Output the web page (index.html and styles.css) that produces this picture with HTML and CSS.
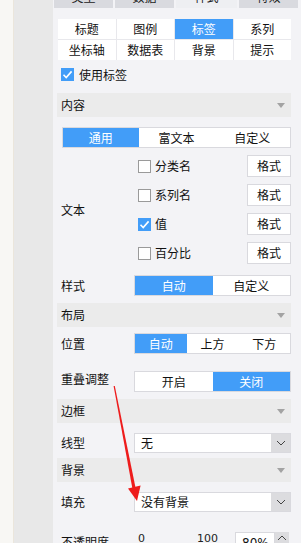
FILE: index.html
```html
<!DOCTYPE html>
<html lang="zh">
<head>
<meta charset="utf-8">
<link rel="stylesheet" href="styles.css">
</head>
<body>
<div class="app">
  <div class="edge"></div>
  <div class="rail"></div>
  <div class="panel">
    <div class="tabs">
      <div class="tab">类型</div>
      <div class="tab">数据</div>
      <div class="tab active">样式</div>
      <div class="tab">特效</div>
    </div>

    <div class="cats">
      <div class="cat">标题</div>
      <div class="cat">图例</div>
      <div class="cat active">标签</div>
      <div class="cat">系列</div>
      <div class="cat">坐标轴</div>
      <div class="cat">数据表</div>
      <div class="cat">背景</div>
      <div class="cat">提示</div>
    </div>

    <div class="check-row">
      <span class="cb on"><svg viewBox="0 0 13 13"><path d="M2.5 6.8 L5.2 9.6 L10.6 3.4" fill="none" stroke="#fff" stroke-width="1.6"/></svg></span>
      <span>使用标签</span>
    </div>

    <div class="section">内容<span class="tri"></span></div>

    <div class="seg seg-wide three">
      <div class="seg-item active">通用</div>
      <div class="seg-item">富文本</div>
      <div class="seg-item">自定义</div>
    </div>

    <div class="form-row text-group">
      <div class="lbl">文本</div>
      <div class="opts">
        <div class="opt"><span class="cb"></span><span class="opt-name">分类名</span><span class="fmt">格式</span></div>
        <div class="opt"><span class="cb"></span><span class="opt-name">系列名</span><span class="fmt">格式</span></div>
        <div class="opt"><span class="cb on"><svg viewBox="0 0 13 13"><path d="M2.5 6.8 L5.2 9.6 L10.6 3.4" fill="none" stroke="#fff" stroke-width="1.6"/></svg></span><span class="opt-name">值</span><span class="fmt">格式</span></div>
        <div class="opt"><span class="cb"></span><span class="opt-name">百分比</span><span class="fmt">格式</span></div>
      </div>
    </div>

    <div class="form-row row-style">
      <div class="lbl">样式</div>
      <div class="seg two">
        <div class="seg-item active">自动</div>
        <div class="seg-item">自定义</div>
      </div>
    </div>

    <div class="section sec-layout">布局<span class="tri"></span></div>

    <div class="form-row row-pos">
      <div class="lbl">位置</div>
      <div class="seg three">
        <div class="seg-item active">自动</div>
        <div class="seg-item">上方</div>
        <div class="seg-item">下方</div>
      </div>
    </div>

    <div class="form-row row-overlap">
      <div class="lbl lbl-lift">重叠调整</div>
      <div class="seg two">
        <div class="seg-item">开启</div>
        <div class="seg-item active">关闭</div>
      </div>
    </div>

    <div class="section sec-border">边框<span class="tri"></span></div>

    <div class="form-row row-line">
      <div class="lbl">线型</div>
      <div class="select">
        <span class="select-val">无</span>
        <span class="select-btn"><svg viewBox="0 0 10 6" width="10" height="6"><path d="M1 1 L5 5 L9 1" fill="none" stroke="#444" stroke-width="1"/></svg></span>
      </div>
    </div>

    <div class="section sec-bg">背景<span class="tri"></span></div>

    <div class="form-row row-fill">
      <div class="lbl">填充</div>
      <div class="select">
        <span class="select-val">没有背景</span>
        <span class="select-btn"><svg viewBox="0 0 10 6" width="10" height="6"><path d="M1 1 L5 5 L9 1" fill="none" stroke="#444" stroke-width="1"/></svg></span>
      </div>
    </div>

    <div class="form-row row-opacity">
      <div class="lbl lbl-low">不透明度</div>
      <div class="opacity">
        <div class="scale"><span>0</span><span>100</span></div>
        <div class="num">
          <span class="num-val">80%</span>
          <span class="num-btn"><svg viewBox="0 0 10 6" width="10" height="6"><path d="M1 5 L5 1 L9 5" fill="none" stroke="#444" stroke-width="1"/></svg></span>
        </div>
      </div>
    </div>
  </div>

  <svg class="arrow" width="301" height="543" viewBox="0 0 301 543">
    <polygon points="113.6,386 114.8,386 135.6,488 132.4,488.6" fill="#ee1c1c"/>
    <polygon points="128,488.4 140.6,485.6 137,501" fill="#ee1c1c"/>
  </svg>
</div>
</body>
</html>
```

FILE: styles.css
```css
* { box-sizing: border-box; }

html, body {
  margin: 0;
  padding: 0;
}

body {
  width: 301px;
  height: 543px;
  overflow: hidden;
  font-family: "Noto Sans CJK SC", "Microsoft YaHei", "Noto Sans", sans-serif;
  font-size: 12px;
  color: #111;
  line-height: 1;
}

.app {
  position: relative;
  display: flex;
  height: 543px;
  overflow: hidden;
}

.edge {
  width: 15px;
  background: #f8f7f4;
  border-right: 1px solid #ebe6dc;
}

.rail {
  width: 40px;
  background: #e8e8e8;
}

.panel {
  flex: 1;
  background: #f3f3f6;
  padding: 0 10px 0 4px;
  display: flex;
  flex-direction: column;
}
.panel > * { flex-shrink: 0; }

/* top tabs (scrolled off) */
.tabs {
  display: grid;
  grid-template-columns: 59px 59px 61px 59px;
  column-gap: 2px;
  margin: -14px -7px 0 -3px;
  height: 22px;
}
.tab {
  background: #d9dadf;
  display: flex;
  align-items: center;
  justify-content: center;
  color: #222;
}
.tab.active { background: #eeeff2; }

/* category grid */
.cats {
  margin: 11px 0 0 1px;
  display: grid;
  grid-template-columns: repeat(4, 1fr);
  grid-auto-rows: 20px;
  gap: 1px;
  background: #e8e8ec;
}
.cat {
  background: #fff;
  display: flex;
  align-items: center;
  justify-content: center;
  font-size: 12px;
}
.cat.active {
  background: #429df8;
  color: #fff;
}

/* checkbox */
.cb {
  width: 13px;
  height: 13px;
  flex: none;
  border: 1px solid #9a9a9a;
  background: #fff;
  display: block;
}
.cb.on {
  border: none;
  background: #429df8;
}
.cb svg { display: block; width: 13px; height: 13px; }

.check-row {
  margin-top: 8px;
  height: 13px;
  padding-left: 4px;
  display: flex;
  align-items: center;
  gap: 5px;
}

/* section header */
.section {
  margin-top: 12px;
  height: 24px;
  background: #ebebeb;
  padding: 0 6px 0 4px;
  display: flex;
  align-items: center;
  justify-content: space-between;
}
.tri {
  width: 0;
  height: 0;
  border-left: 4px solid transparent;
  border-right: 4px solid transparent;
  border-top: 5px solid #a3a3a3;
}
.sec-layout { margin-top: 7px; }
.sec-border { margin-top: 7px; }
.sec-bg { margin-top: 5px; }

/* segmented */
.seg {
  height: 21px;
  border: 1px solid #d9d9de;
  background: #fff;
  display: grid;
}
.seg.three { grid-template-columns: repeat(3, 1fr); }
.seg.two { grid-template-columns: repeat(2, 1fr); }
.seg-item {
  display: flex;
  align-items: center;
  justify-content: center;
}
.seg-item.active {
  background: #429df8;
  color: #fff;
}
.seg-wide {
  margin: 10px 0 0 5px;
}

/* form rows */
.form-row {
  display: grid;
  grid-template-columns: 77px 1fr;
  align-items: center;
}
.lbl {
  padding-left: 4px;
  white-space: nowrap;
}
.lbl-lift { padding-bottom: 6px; }

.text-group { margin-top: 7px; }
.opts {
  display: flex;
  flex-direction: column;
  gap: 7px;
}
.opt {
  height: 22px;
  display: flex;
  align-items: center;
  padding-left: 4px;
}
.opt-name { margin-left: 4px; }
.fmt {
  margin-left: auto;
  width: 44px;
  height: 22px;
  border: 1px solid #d9d9de;
  background: #fff;
  display: flex;
  align-items: center;
  justify-content: center;
}

.row-style { margin-top: 11px; }
.row-pos { margin-top: 6px; }
.row-overlap { margin-top: 17px; }
.row-line { margin-top: 10px; }
.row-fill { margin-top: 10px; }

/* select */
.select {
  height: 20px;
  border: 1px solid #d9d9de;
  background: #fff;
  display: flex;
}
.select-val {
  flex: 1;
  padding-left: 6px;
  display: flex;
  align-items: center;
}
.select-btn {
  width: 19px;
  background: #dcdcdf;
  display: flex;
  align-items: center;
  justify-content: center;
}

/* opacity */
.row-opacity {
  margin-top: 20px;
  align-items: start;
}
.lbl-low { padding-top: 4px; }
.opacity {
  display: flex;
}
.scale {
  width: 101px;
  display: flex;
  justify-content: space-between;
  padding: 1px 17px 0 4px;
  font-family: "DejaVu Sans", sans-serif;
  font-size: 11px;
  color: #222;
}
.num {
  display: flex;
  height: 22px;
}
.num-val {
  width: 40px;
  border: 1px solid #d9d9de;
  background: #fff;
  padding: 4px 0 0 6px;
  font-family: "DejaVu Sans", sans-serif;
  font-size: 12px;
}
.num-btn {
  width: 14px;
  height: 12px;
  background: #dcdcdf;
  display: flex;
  align-items: center;
  justify-content: center;
}

.arrow {
  position: absolute;
  left: 0;
  top: 0;
  pointer-events: none;
}
```
